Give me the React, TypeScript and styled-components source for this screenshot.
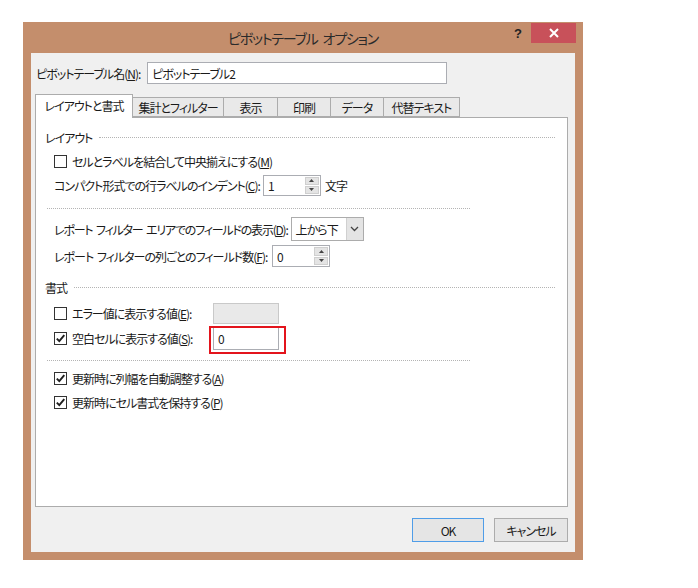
import styled, { createGlobalStyle } from 'styled-components';

const GlobalStyle = createGlobalStyle`
  html, body {
    margin: 0;
    padding: 0;
    background: #ffffff;
  }
  body {
    font-family: "Noto Sans CJK JP", "Noto Sans", sans-serif;
    font-size: 12px;
    letter-spacing: -1px;
    word-spacing: 2px;
    color: #1a1a1a;
    font-feature-settings: "palt";
  }
  * {
    box-sizing: border-box;
  }
`;

const Page = styled.div`
  padding: 22px 0 0 23px;
`;

const Dialog = styled.div`
  width: 560px;
  height: 538px;
  background: #c48e6c;
  display: flex;
  flex-direction: column;
`;

const TitleBar = styled.div`
  height: 31px;
  flex: none;
  display: grid;
  grid-template-columns: 1fr auto 1fr;
`;

const Title = styled.div`
  grid-column: 2;
  align-self: center;
  font-size: 14px;
  letter-spacing: -1.2px;
  word-spacing: 3px;
  color: #2a2a2a;
  white-space: nowrap;
`;

const TitleButtons = styled.div`
  grid-column: 3;
  justify-self: end;
  display: flex;
  align-items: flex-start;
  padding: 1px 7px 0 0;
`;

const HelpButton = styled.div`
  width: 26px;
  height: 20px;
  display: flex;
  align-items: center;
  justify-content: center;
  font: bold 13px "Liberation Sans", sans-serif;
  letter-spacing: 0;
  color: #222;
`;

const CloseButton = styled.div`
  width: 45px;
  height: 20px;
  background: #c8515a;
  display: flex;
  align-items: center;
  justify-content: center;
`;

const Body = styled.div`
  flex: 1;
  margin: 0 8px 8px;
  background: #f0f0f0;
  padding: 9px 7px 0 4px;
  display: flex;
  flex-direction: column;
`;

const NameRow = styled.div`
  display: flex;
  align-items: center;
  height: 22px;
  padding-left: 1px;
`;

const Label = styled.span<{ $w?: number; $tight?: boolean }>`
  white-space: nowrap;
  flex: none;
  min-width: ${({ $w }) => ($w ? `${$w}px` : 'auto')};
  padding-right: ${({ $w }) => ($w ? 3 : 0)}px;
  letter-spacing: ${({ $tight }) => ($tight ? '-1.2px' : 'inherit')};
`;

const Key = styled.span`
  text-decoration: underline;
`;

const TextBox = styled.div<{ $w: number; $h: number; $disabled?: boolean }>`
  width: ${({ $w }) => $w}px;
  height: ${({ $h }) => $h}px;
  border: 1px solid ${({ $disabled }) => ($disabled ? '#c9c9c9' : '#abadb3')};
  background: ${({ $disabled }) => ($disabled ? '#e9e9e9' : '#ffffff')};
  display: flex;
  align-items: center;
  padding-left: 4px;
  flex: none;
`;

const TabStrip = styled.div`
  margin-top: 10px;
  height: 23px;
  display: flex;
  align-items: flex-end;
  position: relative;
  z-index: 1;
`;

const Tab = styled.div<{ $w: number; $active?: boolean }>`
  width: ${({ $w }) => $w + 1}px;
  height: ${({ $active }) => ($active ? 24 : 20)}px;
  margin-right: -1px;
  margin-bottom: ${({ $active }) => ($active ? -1 : 0)}px;
  background: ${({ $active }) => ($active ? '#ffffff' : '#e9e9e9')};
  border: 1px solid #acacac;
  border-bottom: ${({ $active }) => ($active ? 'none' : '1px solid #acacac')};
  display: flex;
  align-items: center;
  justify-content: center;
  padding-bottom: ${({ $active }) => ($active ? 2 : 0)}px;
  white-space: nowrap;
  position: relative;
  z-index: ${({ $active }) => ($active ? 2 : 1)};
`;

const Panel = styled.div`
  width: 533px;
  height: 390px;
  background: #ffffff;
  border: 1px solid #acacac;
  padding: 11px 0 0 18px;
  display: flex;
  flex-direction: column;
`;

const GroupHeader = styled.div<{ $mt?: number }>`
  display: flex;
  align-items: center;
  gap: 7px;
  height: 16px;
  margin: ${({ $mt }) => $mt ?? 0}px 12px 0 -9px;
  white-space: nowrap;
`;

const HeaderLine = styled.div`
  flex: 1;
  border-top: 1px dotted #b4b4b4;
`;

const Separator = styled.div<{ $mt: number; $mb: number }>`
  width: 423px;
  margin: ${({ $mt, $mb }) => `${$mt}px 0 ${$mb}px -7px`};
  border-top: 1px dotted #b4b4b4;
`;

const Row = styled.div<{ $mt?: number }>`
  display: flex;
  align-items: center;
  height: 24px;
  margin-top: ${({ $mt }) => $mt ?? 0}px;
`;

const Box = styled.div`
  width: 13px;
  height: 13px;
  border: 1px solid #333333;
  background: #ffffff;
  margin-right: 5px;
  flex: none;
  display: flex;
  align-items: center;
  justify-content: center;
`;

const Spinner = styled.div<{ $w: number; $h: number }>`
  width: ${({ $w }) => $w}px;
  height: ${({ $h }) => $h}px;
  border: 1px solid #abadb3;
  background: #ffffff;
  display: flex;
  flex: none;
`;

const SpinValue = styled.div`
  flex: 1;
  display: flex;
  align-items: center;
  padding-left: 4px;
`;

const SpinButtons = styled.div`
  width: 16px;
  display: flex;
  flex-direction: column;
  gap: 1px;
  padding: 1px;
`;

const SpinButton = styled.div`
  flex: 1;
  background: #e4e4e4;
  border: 1px solid #cfcfcf;
  display: flex;
  align-items: center;
  justify-content: center;
`;

const Select = styled.div`
  width: 73px;
  height: 24px;
  border: 1px solid #acacac;
  background: #ffffff;
  display: flex;
  flex: none;
`;

const SelectValue = styled.div`
  flex: 1;
  display: flex;
  align-items: center;
  padding-left: 4px;
  white-space: nowrap;
`;

const SelectButton = styled.div`
  width: 17px;
  background: #e4e4e4;
  border-left: 1px solid #d0d0d0;
  display: flex;
  align-items: center;
  justify-content: center;
`;

const Suffix = styled.span`
  margin-left: 4px;
`;

const Highlighted = styled.div`
  position: relative;
`;

const RedFrame = styled.div`
  position: absolute;
  left: -4px;
  top: -1px;
  width: 77px;
  height: 28px;
  border: 2px solid #e3141c;
  pointer-events: none;
`;

const ButtonRow = styled.div`
  margin-top: 11px;
  display: flex;
  justify-content: flex-end;
  gap: 10px;
`;

const Button = styled.div<{ $w: number; $default?: boolean }>`
  width: ${({ $w }) => $w}px;
  height: 24px;
  background: #e5e5e5;
  border: 1px solid ${({ $default }) => ($default ? '#4f9de8' : '#acacac')};
  display: flex;
  align-items: center;
  justify-content: center;
  white-space: nowrap;
`;

function Check({ checked }: { checked?: boolean }) {
  return (
    <Box>
      {checked && (
        <svg width="11" height="11" viewBox="0 0 11 11">
          <path d="M1.8 5.6 L4.3 8.2 L9.3 2.2" fill="none" stroke="#1e1e1e" strokeWidth="1.9" />
        </svg>
      )}
    </Box>
  );
}

function SpinBox({ value, w, h }: { value: string; w: number; h: number }) {
  return (
    <Spinner $w={w} $h={h}>
      <SpinValue>{value}</SpinValue>
      <SpinButtons>
        <SpinButton>
          <svg width="5" height="3" viewBox="0 0 5 3">
            <path d="M0 3 L2.5 0 L5 3 Z" fill="#444" />
          </svg>
        </SpinButton>
        <SpinButton>
          <svg width="5" height="3" viewBox="0 0 5 3">
            <path d="M0 0 L2.5 3 L5 0 Z" fill="#444" />
          </svg>
        </SpinButton>
      </SpinButtons>
    </Spinner>
  );
}

const tabs = [
  { label: 'レイアウトと書式', w: 97 },
  { label: '集計とフィルター', w: 91 },
  { label: '表示', w: 54 },
  { label: '印刷', w: 53 },
  { label: 'データ', w: 53 },
  { label: '代替テキスト', w: 76 },
];

export default function App() {
  return (
    <>
      <GlobalStyle />
      <Page>
        <Dialog>
          <TitleBar>
            <Title>ピボットテーブル オプション</Title>
            <TitleButtons>
              <HelpButton>?</HelpButton>
              <CloseButton>
                <svg width="10" height="10" viewBox="0 0 10 10">
                  <path d="M1 1 L9 9 M9 1 L1 9" stroke="#ffffff" strokeWidth="2" />
                </svg>
              </CloseButton>
            </TitleButtons>
          </TitleBar>
          <Body>
            <NameRow>
              <Label $w={111}>
                ピボットテーブル名(<Key>N</Key>):
              </Label>
              <TextBox $w={300} $h={22}>
                ピボットテーブル2
              </TextBox>
            </NameRow>

            <TabStrip>
              {tabs.map((t, i) => (
                <Tab key={t.label} $w={t.w} $active={i === 0}>
                  {t.label}
                </Tab>
              ))}
            </TabStrip>

            <Panel>
              <GroupHeader>
                レイアウト
                <HeaderLine />
              </GroupHeader>
              <Row $mt={4}>
                <Check />
                <Label>
                  セルとラベルを結合して中央揃えにする(<Key>M</Key>)
                </Label>
              </Row>
              <Row>
                <Label $w={207}>
                  コンパクト形式での行ラベルのインデント(<Key>C</Key>):
                </Label>
                <SpinBox value="1" w={58} h={21} />
                <Suffix>文字</Suffix>
              </Row>
              <Separator $mt={11} $mb={8} />
              <Row>
                <Label $w={236} $tight>
                  レポート フィルター エリアでのフィールドの表示(<Key>D</Key>):
                </Label>
                <Select>
                  <SelectValue>上から下</SelectValue>
                  <SelectButton>
                    <svg width="9" height="6" viewBox="0 0 9 6">
                      <path d="M1 1 L4.5 4.5 L8 1" fill="none" stroke="#444" strokeWidth="1.3" />
                    </svg>
                  </SelectButton>
                </Select>
              </Row>
              <Row $mt={3}>
                <Label $w={218}>
                  レポート フィルターの列ごとのフィールド数(<Key>F</Key>):
                </Label>
                <SpinBox value="0" w={58} h={22} />
              </Row>

              <GroupHeader $mt={11}>
                書式
                <HeaderLine />
              </GroupHeader>
              <Row $mt={6}>
                <Check />
                <Label $w={141}>
                  エラー値に表示する値(<Key>E</Key>):
                </Label>
                <TextBox $w={66} $h={21} $disabled />
              </Row>
              <Row $mt={1}>
                <Check checked />
                <Label $w={141}>
                  空白セルに表示する値(<Key>S</Key>):
                </Label>
                <Highlighted>
                  <TextBox $w={66} $h={23}>
                    0
                  </TextBox>
                  <RedFrame />
                </Highlighted>
              </Row>
              <Separator $mt={10} $mb={5} />
              <Row>
                <Check checked />
                <Label>
                  更新時に列幅を自動調整する(<Key>A</Key>)
                </Label>
              </Row>
              <Row>
                <Check checked />
                <Label>
                  更新時にセル書式を保持する(<Key>P</Key>)
                </Label>
              </Row>
            </Panel>

            <ButtonRow>
              <Button $w={72} $default>
                OK
              </Button>
              <Button $w={74}>キャンセル</Button>
            </ButtonRow>
          </Body>
        </Dialog>
      </Page>
    </>
  );
}
